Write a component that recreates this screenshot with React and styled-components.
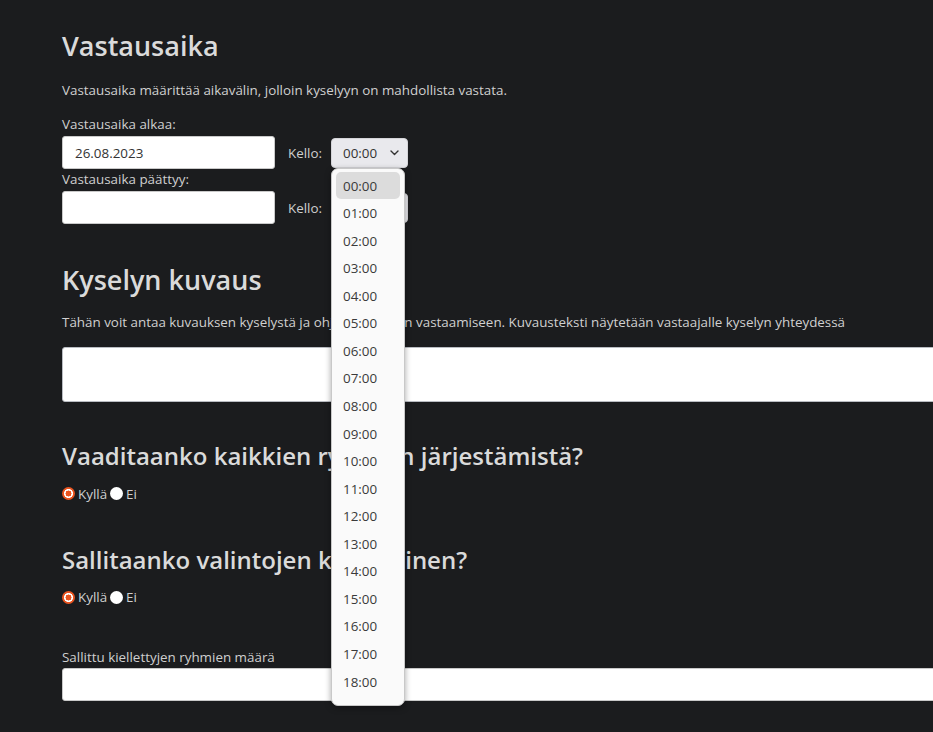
import React from "react";
import styled, { createGlobalStyle } from "styled-components";

const Global = createGlobalStyle`
  html, body { margin: 0; padding: 0; overflow: hidden; background: #1b1c1e; }
  body { font-family: "Open Sans", "Noto Sans", sans-serif; color: #d2d2d2; }
  * { box-sizing: border-box; }
`;

const Page = styled.div`
  width: 1100px;
  padding: 30px 0 40px 62px;
  display: flex;
  flex-direction: column;
`;

const Heading = styled.h2`
  margin: ${(p) => p.$mt || 0}px 0 0;
  font-size: ${(p) => p.$size}px;
  font-weight: 600;
  line-height: 1.2;
  color: #dadada;
`;

const Desc = styled.p`
  margin: ${(p) => p.$mt}px 0 0;
  font-size: 13.4px;
  line-height: 16px;
  color: #d0d0d0;
`;

const FieldLabel = styled.label`
  display: block;
  margin-top: ${(p) => p.$mt}px;
  font-size: 13.4px;
  line-height: 16px;
  color: #cfcfcf;
`;

const DateRow = styled.div`
  display: flex;
  align-items: center;
  margin-top: ${(p) => p.$mt}px;
`;

const TextInput = styled.input`
  width: ${(p) => p.$w || "213px"};
  height: 33px;
  margin-top: ${(p) => p.$mt || 0}px;
  border: 1px solid #c9c9c9;
  border-radius: 3px;
  background: #fff;
  padding: 0 12px;
  font-family: inherit;
  font-size: 13.4px;
  color: #333;
  outline: none;
`;

const Kello = styled.span`
  width: 43px;
  margin-left: 13px;
  font-size: 13.4px;
  color: #cfcfcf;
`;

const SelectWrap = styled.div`
  position: relative;
`;

const SelectBox = styled.div`
  width: 77px;
  height: 30px;
  background: #e9e9ed;
  border: 1px solid #d4d4d8;
  border-radius: 4px;
  display: flex;
  align-items: center;
  justify-content: space-between;
  padding: 0 8px 0 11px;
  font-size: 13.4px;
  color: #333;
`;

const Menu = styled.div`
  position: absolute;
  top: 30px;
  left: 0;
  width: 74px;
  height: 538px;
  background: #fafafa;
  border: 1px solid #c8c8c8;
  border-radius: 7px;
  box-shadow: 0 2px 6px rgba(0, 0, 0, 0.35);
  padding: 3px 4px 0;
  z-index: 5;
`;

const List = styled.ul`
  list-style: none;
  margin: 0;
  padding: 0;
  height: 524px;
  overflow: hidden;
`;

const Option = styled.li`
  height: 27.55px;
  display: flex;
  align-items: center;
  padding-left: 7px;
  border-radius: 5px;
  font-size: 13.4px;
  color: #3a3a3a;
  background: ${(p) => (p.$active ? "#dcdcdc" : "transparent")};
`;

const TextArea = styled.textarea`
  display: block;
  width: 900px;
  height: 55px;
  margin-top: 17px;
  border: 1px solid #b9bcc2;
  border-radius: 3px;
  background: #fff;
  resize: none;
  outline: none;
`;

const RadioRow = styled.div`
  display: flex;
  align-items: center;
  margin-top: ${(p) => p.$mt}px;
  font-size: 13.4px;
  color: #cfcfcf;
`;

const RadioLabel = styled.label`
  display: flex;
  align-items: center;
  gap: 3px;
  margin-right: 3px;
`;

const Radio = styled.input.attrs({ type: "radio" })`
  appearance: none;
  margin: 0;
  width: 13px;
  height: 13px;
  border-radius: 50%;
  background: #fff;
  &:checked {
    background: radial-gradient(circle, #e95420 0 2.8px, #fff 3.2px 4.3px, #e95420 4.7px);
  }
`;

const Chevron = () => (
  <svg width="9" height="6" viewBox="0 0 9 6" fill="none">
    <path d="M1 1l3.5 3.5L8 1" stroke="#333" strokeWidth="1.4" strokeLinecap="round" strokeLinejoin="round" />
  </svg>
);

const hours = Array.from({ length: 24 }, (_, i) => `${String(i).padStart(2, "0")}:00`);

function TimeSelect({ open }) {
  return (
    <SelectWrap>
      <SelectBox>
        <span>00:00</span>
        <Chevron />
      </SelectBox>
      {open && (
        <Menu>
          <List>
            {hours.map((h, i) => (
              <Option key={h} $active={i === 0}>
                {h}
              </Option>
            ))}
          </List>
        </Menu>
      )}
    </SelectWrap>
  );
}

function YesNo({ name, mt }) {
  return (
    <RadioRow $mt={mt}>
      <RadioLabel>
        <Radio name={name} defaultChecked />
        Kyllä
      </RadioLabel>
      <RadioLabel>
        <Radio name={name} />
        Ei
      </RadioLabel>
    </RadioRow>
  );
}

export default function App() {
  return (
    <>
      <Global />
      <Page>
        <Heading $size={27}>Vastausaika</Heading>
        <Desc $mt={20}>Vastausaika määrittää aikavälin, jolloin kyselyyn on mahdollista vastata.</Desc>
        <FieldLabel $mt={18}>Vastausaika alkaa:</FieldLabel>
        <DateRow $mt={4}>
          <TextInput defaultValue="26.08.2023" />
          <Kello>Kello:</Kello>
          <TimeSelect open />
        </DateRow>
        <FieldLabel $mt={2}>Vastausaika päättyy:</FieldLabel>
        <DateRow $mt={4}>
          <TextInput />
          <Kello>Kello:</Kello>
          <TimeSelect />
        </DateRow>
        <Heading $size={27} $mt={40}>Kyselyn kuvaus</Heading>
        <Desc $mt={17}>
          Tähän voit antaa kuvauksen kyselystä ja ohjeita kyselyyn vastaamiseen. Kuvausteksti näytetään vastaajalle kyselyn yhteydessä
        </Desc>
        <TextArea />
        <Heading $size={24} $mt={40}>Vaaditaanko kaikkien ryhmien järjestämistä?</Heading>
        <YesNo name="a" mt={14} />
        <Heading $size={24} $mt={43}>Sallitaanko valintojen kieltäminen?</Heading>
        <YesNo name="b" mt={14} />
        <FieldLabel $mt={43}>Sallittu kiellettyjen ryhmien määrä</FieldLabel>
        <TextInput $w="900px" $mt={3} />
      </Page>
    </>
  );
}
